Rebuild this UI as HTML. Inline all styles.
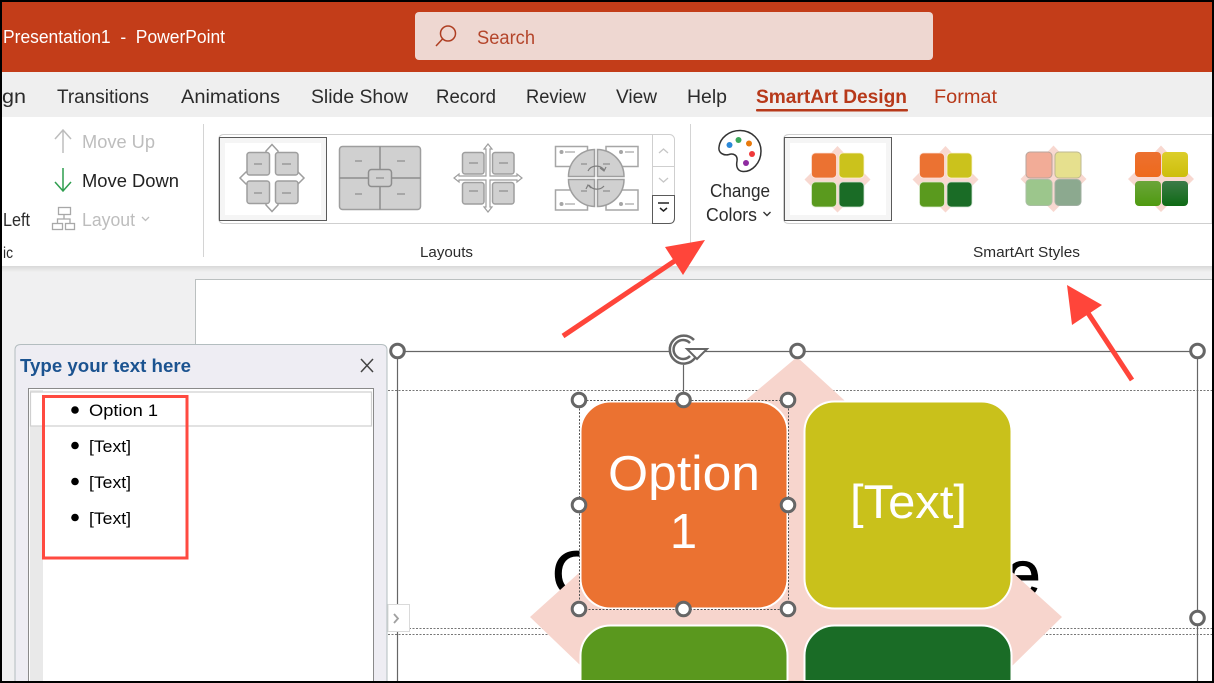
<!DOCTYPE html>
<html><head><meta charset="utf-8"><title>PowerPoint</title>
<style>
html,body{margin:0;padding:0;background:#000;width:1214px;height:683px;overflow:hidden}
svg{display:block;position:absolute;left:0;top:0;overflow:hidden}
text{font-family:"Liberation Sans",sans-serif;fill:#2b2b2b}
</style></head><body>
<svg width="1214" height="683" viewBox="0 0 1214 683" xmlns="http://www.w3.org/2000/svg">
<defs>
<linearGradient id="sh" x1="0" y1="0" x2="0" y2="1"><stop offset="0" stop-color="#d8d8d8"/><stop offset="1" stop-color="#f0f0f0"/></linearGradient>
<linearGradient id="g1" x1="0" y1="0" x2="0" y2="1"><stop offset="0" stop-color="#EC7030"/><stop offset="1" stop-color="#EE6A1C"/></linearGradient>
<linearGradient id="g2" x1="0" y1="0" x2="0" y2="1"><stop offset="0" stop-color="#DCCE2A"/><stop offset="1" stop-color="#CDBE0C"/></linearGradient>
<linearGradient id="g3" x1="0" y1="0" x2="0" y2="1"><stop offset="0" stop-color="#6BA53A"/><stop offset="1" stop-color="#4F9A10"/></linearGradient>
<linearGradient id="g4" x1="0" y1="0" x2="0" y2="1"><stop offset="0" stop-color="#3D7B48"/><stop offset="1" stop-color="#0E6A14"/></linearGradient>
<g id="pk"><path fill="#F8D8D0" d="M0 -33.500 L7 -26 L7 -7 L26 -7 L33 0 L26 7 L7 7 L7 26 L0 33 L-7 26 L-7 7 L-26 7 L-33 0 L-26 -7 L-7 -7 L-7 -26Z"/></g>
<g id="st"><use href="#pk"/>
<rect x="-26" y="-26.500" width="25" height="25" rx="4" fill="#EB7232" stroke="#fbe3da" stroke-width=".8"/>
<rect x="1.500" y="-26.500" width="25" height="25" rx="4" fill="#CBC21C" stroke="#fbf3d0" stroke-width=".8"/>
<rect x="-26" y="2.500" width="25" height="25" rx="4" fill="#5A9A1E" stroke="#dcebd0" stroke-width=".8"/>
<rect x="1.500" y="2.500" width="25" height="25" rx="4" fill="#1A6C26" stroke="#cfe3d2" stroke-width=".8"/></g>
</defs>

<!-- window background -->
<rect x="2" y="2" width="1210" height="679" fill="#F0F0F1"/>
<!-- title bar -->
<rect x="2" y="2" width="1210" height="70" fill="#C33D19"/>
<text x="3" y="43" font-size="18" textLength="222" lengthAdjust="spacingAndGlyphs" style="fill:#fff" xml:space="preserve">Presentation1  -  PowerPoint</text>
<rect x="415" y="12" width="518" height="48" rx="4" fill="#EED7D1"/>
<g fill="none" stroke="#AE3E22" stroke-width="1.500"><circle cx="448" cy="33.500" r="7.500"/><path d="M442.500 39 L436 46"/></g>
<text x="477" y="44" font-size="19" textLength="58" lengthAdjust="spacingAndGlyphs" style="fill:#B4452B">Search</text>

<!-- tabs -->
<rect x="2" y="72" width="1210" height="45" fill="#EFEFEF"/>
<g font-size="19">
<text x="2" y="103" textLength="24" lengthAdjust="spacingAndGlyphs">gn</text>
<text x="57" y="103" textLength="92" lengthAdjust="spacingAndGlyphs">Transitions</text>
<text x="181" y="103" textLength="99" lengthAdjust="spacingAndGlyphs">Animations</text>
<text x="311" y="103" textLength="97" lengthAdjust="spacingAndGlyphs">Slide Show</text>
<text x="436" y="103" textLength="60" lengthAdjust="spacingAndGlyphs">Record</text>
<text x="526" y="103" textLength="60" lengthAdjust="spacingAndGlyphs">Review</text>
<text x="616" y="103" textLength="41" lengthAdjust="spacingAndGlyphs">View</text>
<text x="687" y="103" textLength="40" lengthAdjust="spacingAndGlyphs">Help</text>
<text x="756" y="103" textLength="151" lengthAdjust="spacingAndGlyphs" font-weight="bold" style="fill:#B7391A">SmartArt Design</text>
<text x="934" y="103" textLength="63" lengthAdjust="spacingAndGlyphs" style="fill:#B7391A">Format</text>
</g>
<rect x="756" y="109" width="152" height="2.500" rx="1" fill="#B7391A"/>

<!-- ribbon -->
<rect x="2" y="117" width="1210" height="149" fill="#fff"/>
<rect x="2" y="266" width="1210" height="6" fill="url(#sh)"/>
<rect x="203" y="124" width="1" height="133" fill="#D4D4D4"/>
<rect x="690" y="124" width="1" height="133" fill="#D4D4D4"/>

<!-- left group -->
<g fill="none" stroke="#BDBDBD" stroke-width="1.500"><path d="M63 153 V130 M55 139 L63 130 L71 139"/></g>
<g fill="none" stroke="#2F9E4F" stroke-width="1.500"><path d="M63 168 V191 M55 182 L63 191 L71 182"/></g>
<g fill="none" stroke="#A8A8A8" stroke-width="1.300"><rect x="58.500" y="207.500" width="12" height="7"/><rect x="52.500" y="223.500" width="10" height="6"/><rect x="65.500" y="223.500" width="9" height="6"/><path d="M64 214.500 V219 M57.500 223.500 V219 H70 V223.500"/></g>
<text x="82" y="148" font-size="18" textLength="73" lengthAdjust="spacingAndGlyphs" style="fill:#BDBDBD">Move Up</text>
<text x="82" y="187" font-size="18" textLength="97" lengthAdjust="spacingAndGlyphs" style="fill:#222">Move Down</text>
<text x="82" y="226" font-size="18" textLength="53" lengthAdjust="spacingAndGlyphs" style="fill:#BDBDBD">Layout</text>
<path d="M142 217 L145.500 220.500 L149 217" fill="none" stroke="#BDBDBD" stroke-width="1.300"/>
<text x="3" y="226" font-size="18" textLength="27" lengthAdjust="spacingAndGlyphs">Left</text>
<text x="3" y="258" font-size="16" textLength="10" lengthAdjust="spacingAndGlyphs">ic</text>

<!-- layouts gallery -->
<rect x="218.500" y="134.500" width="456" height="89" rx="5" fill="#fff" stroke="#CFCFCF"/>
<rect x="219.500" y="137.500" width="107" height="83" fill="#F5F5F5" stroke="#5A5A5A"/>
<rect x="225" y="143" width="96" height="72" fill="#fff"/>
<!-- icon 1 -->
<path fill="#fff" stroke="#9E9E9E" stroke-width="1.500" d="M272 144.500 L278 151 V172 H298 L304 178 L298 184 H278 V205 L272 211.500 L266 205 V184 H246 L240 178 L246 172 H266 V151Z"/>
<g fill="#D0D0D0" stroke="#9E9E9E" stroke-width="1.500">
<rect x="247" y="152.500" width="22.500" height="22.500" rx="2.500"/><rect x="275.500" y="152.500" width="22.500" height="22.500" rx="2.500"/>
<rect x="247" y="181" width="22.500" height="22.500" rx="2.500"/><rect x="275.500" y="181" width="22.500" height="22.500" rx="2.500"/>
</g>
<g stroke="#8E8E8E" stroke-width="1.200"><path d="M254 164 H262 M282 164 H291 M254 193 H262 M282 193 H291"/></g>
<!-- icon 2 -->
<rect x="339.500" y="146.500" width="81" height="63" rx="3" fill="#D0D0D0" stroke="#9E9E9E" stroke-width="1.500"/>
<path d="M380 146.500 V209.500 M339.500 178 H420.500" stroke="#8E8E8E" stroke-width="1.500"/>
<rect x="368.500" y="169.500" width="23" height="17" rx="3" fill="#D0D0D0" stroke="#8E8E8E" stroke-width="1.500"/>
<path d="M355 161 H362 M397 161 H405 M355 194 H362 M397 194 H405 M376 178 H384" stroke="#8E8E8E" stroke-width="1.200"/>
<!-- icon 3 -->
<path fill="#fff" stroke="#9E9E9E" stroke-width="1.200" d="M488 144 L492 149 H490 V176 H517 V174 L522 178 L517 182 V180 H490 V207 H492 L488 212 L484 207 H486 V180 H459 V182 L454 178 L459 174 V176 H486 V149 H484Z"/>
<g fill="#D0D0D0" stroke="#9E9E9E" stroke-width="1.500">
<rect x="462.500" y="152.500" width="21.500" height="21.500" rx="2.500"/><rect x="492.500" y="152.500" width="21.500" height="21.500" rx="2.500"/>
<rect x="462.500" y="182.500" width="21.500" height="21.500" rx="2.500"/><rect x="492.500" y="182.500" width="21.500" height="21.500" rx="2.500"/>
</g>
<path d="M469 163 H478 M499 163 H508 M469 191 H478 M499 191 H508" stroke="#8E8E8E" stroke-width="1.200"/>
<!-- icon 4 -->
<g fill="#fff" stroke="#A6A6A6" stroke-width="1.500">
<rect x="555.500" y="146.500" width="32" height="20"/><rect x="606" y="146.500" width="32" height="20"/>
<rect x="555.500" y="190" width="32" height="20"/><rect x="606" y="190" width="32" height="20"/>
</g>
<g fill="#A6A6A6"><circle cx="561.500" cy="152" r="2"/><circle cx="621" cy="152" r="2"/><circle cx="561.500" cy="204" r="2"/><circle cx="621" cy="204" r="2"/></g>
<path d="M565 152 H575 M625 152 H634 M565 204 H575 M625 204 H634" stroke="#A6A6A6" stroke-width="1.200"/>
<g fill="#D0D0D0" stroke="#9E9E9E" stroke-width="1.500">
<path d="M594.500 149.500 V176.500 H568.500 A27 27 0 0 1 594.500 149.500Z"/><path d="M597.500 149.500 V176.500 H624 A27 27 0 0 0 597.500 149.500Z"/>
<path d="M594.500 206.500 V179.500 H568.500 A27 27 0 0 0 594.500 206.500Z"/><path d="M597.500 206.500 V179.500 H624 A27 27 0 0 1 597.500 206.500Z"/>
</g>
<g fill="none" stroke="#7E7E7E" stroke-width="1.200"><path d="M588 171 A9 8 0 0 1 604 170 M604 186 A9 8 0 0 1 589 185 M600 168 L604 171 L606 167 M591 188 L588 185 L586 189"/></g>
<path d="M581 164 H587 M603 164 H610 M581 191 H587 M603 191 H610" stroke="#8E8E8E" stroke-width="1.200"/>
<!-- scroll -->
<path d="M652.500 134.500 V195 M652.500 166.500 H674.500" stroke="#CFCFCF" fill="none"/>
<path d="M659 153 L663.500 149 L668 153" fill="none" stroke="#C6C6C6" stroke-width="1.300"/>
<path d="M659 178 L663.500 182 L668 178" fill="none" stroke="#C6C6C6" stroke-width="1.300"/>
<path d="M652.500 195.500 H674.500 V218 Q674.500 223.500 669 223.500 H652.500Z" fill="#fff" stroke="#5A5A5A"/>
<path d="M658 203 H669" stroke="#222" stroke-width="1.500"/>
<path d="M660 208 L663.500 211 L667 208" fill="none" stroke="#222" stroke-width="1.500"/>
<text x="420" y="257" font-size="15" textLength="53" lengthAdjust="spacingAndGlyphs">Layouts</text>

<!-- palette -->
<path fill="#fff" stroke="#333" stroke-width="1.500" d="M740 130.500 C752 130.500 761 140 761 151 C761 163 752 172 743 171.500 C737 171 736 166 737 161 C738 155 733 153 729 154.500 C724 156 718 153 719 147 C720 138 729 130.500 740 130.500Z"/>
<circle cx="729.500" cy="145" r="3" fill="#2B88D8"/><circle cx="738.500" cy="140" r="3" fill="#3CA85A"/><circle cx="749" cy="143.500" r="3" fill="#E8790C"/><circle cx="752" cy="154" r="3" fill="#F0383A"/><circle cx="746" cy="163" r="3" fill="#8E2BA0"/>
<text x="710" y="197" font-size="18" textLength="60" lengthAdjust="spacingAndGlyphs">Change</text>
<text x="706" y="221" font-size="18" textLength="51" lengthAdjust="spacingAndGlyphs">Colors</text>
<path d="M763.500 212 L767 215.500 L770.500 212" fill="none" stroke="#333" stroke-width="1.400"/>

<!-- styles gallery -->
<path d="M1212 134.500 H789 Q783.500 134.500 783.500 140 V218 Q783.500 223.500 789 223.500 H1212Z" fill="#fff" stroke="#CFCFCF"/>
<rect x="784.500" y="137.500" width="107" height="83" fill="#F5F5F5" stroke="#5A5A5A"/>
<rect x="790" y="143" width="96" height="72" fill="#fff"/>
<use href="#st" x="837.500" y="179.500"/>
<use href="#st" x="945.500" y="179.500"/>
<!-- style 3 -->
<use href="#pk" x="1053.500" y="179"/>
<rect x="1026" y="152" width="26" height="26" rx="4" fill="#F2AC97" stroke="#B8A59C"/>
<rect x="1055" y="152" width="26" height="26" rx="4" fill="#E6E08E" stroke="#BDB892"/>
<rect x="1026" y="179.500" width="26" height="26" rx="4" fill="#9CC68C" stroke="#A9BFA2"/>
<rect x="1055" y="179.500" width="26" height="26" rx="4" fill="#8CA98F" stroke="#A0B0A2"/>
<!-- style 4 -->
<use href="#pk" x="1161" y="179"/>
<rect x="1135" y="152" width="26" height="25" rx="4" fill="url(#g1)"/>
<rect x="1162" y="152" width="26" height="25" rx="4" fill="url(#g2)"/>
<rect x="1135" y="181" width="26" height="25" rx="4" fill="url(#g3)"/>
<rect x="1162" y="181" width="26" height="25" rx="4" fill="url(#g4)"/>
<text x="973" y="257" font-size="15" textLength="107" lengthAdjust="spacingAndGlyphs">SmartArt Styles</text>

<!-- slide -->
<path d="M195.500 681 V279.500 H1212 V681Z" fill="#fff"/>
<path d="M195.500 681 V279.500 H1212" fill="none" stroke="#BBC0C0"/>
<path d="M374 390.500 H1212 M374 628.500 H1212 M374 634.500 H1212" stroke="#777" stroke-width="1" stroke-dasharray="2 1.500" fill="none"/>
<path d="M397.500 351.500 H1197.500 M397.500 351.500 V681 M1197.500 351.500 V681" stroke="#666" stroke-width="1.200" fill="none"/>
<text x="552" y="596" font-size="64" stroke="#000" stroke-width="1" style="fill:#000">C</text>
<text x="1005" y="596" font-size="64" stroke="#000" stroke-width="1" style="fill:#000">e</text>

<!-- smartart -->
<path fill="#F7D5CD" d="M797 357 L844 400 H746Z M746 400 H844 L1011 571 L1062 617 L1011 667 V681 H580 V665 L530 617 L580 572Z"/>
<g stroke="#fff" stroke-width="2">
<rect x="580.500" y="401.500" width="207" height="207" rx="30" fill="#EB7231"/>
<rect x="804.500" y="401.500" width="207" height="207" rx="30" fill="#C9C11B"/>
<path d="M580.500 681 V655.500 A30 30 0 0 1 610.500 625.500 H757.500 A30 30 0 0 1 787.500 655.500 V681Z" fill="#5A981E"/>
<path d="M804.500 681 V655.500 A30 30 0 0 1 834.500 625.500 H981.500 A30 30 0 0 1 1011.500 655.500 V681Z" fill="#1A6C26"/>
</g>
<text x="608" y="490" font-size="49" textLength="152" lengthAdjust="spacingAndGlyphs" style="fill:#fff">Option</text>
<text x="683.500" y="548" font-size="49" text-anchor="middle" style="fill:#fff">1</text>
<text x="850" y="518" font-size="47" textLength="117" lengthAdjust="spacingAndGlyphs" style="fill:#fff">[Text]</text>

<!-- selection -->
<rect x="579.500" y="400.500" width="209" height="209" fill="none" stroke="#555" stroke-width="1" stroke-dasharray="2 1.500"/>
<path d="M683.500 365 V393" stroke="#666" stroke-width="1.200"/>
<g fill="#fff" stroke="#666" stroke-width="3">
<circle cx="579" cy="400" r="6.800"/><circle cx="683.500" cy="400" r="6.800"/><circle cx="788" cy="400" r="6.800"/>
<circle cx="579" cy="505" r="6.800"/><circle cx="788" cy="505" r="6.800"/>
<circle cx="579" cy="609" r="6.800"/><circle cx="683.500" cy="609" r="6.800"/><circle cx="788" cy="609" r="6.800"/>
<circle cx="397.500" cy="351" r="6.800"/><circle cx="797.500" cy="351" r="6.800"/><circle cx="1197.500" cy="351" r="6.800"/><circle cx="1197.500" cy="618" r="6.800"/>
</g>
<!-- rotate handle -->
<g fill="none" stroke="#666">
<path d="M694 340 A14 14 0 1 0 695 358" stroke-width="2.500" fill="#fff"/>
<path d="M690 343 A9.500 9.500 0 1 0 690 356" stroke-width="2.500"/>
</g>
<path d="M687 349 H707 L697 359Z" fill="#fff" stroke="#666" stroke-width="2"/>

<!-- text pane -->
<path d="M15 681 V350 Q15 344.500 21 344.500 H381 Q387 344.500 387 350 V681Z" fill="#EEEDF3"/>
<path d="M15 681 V350 Q15 344.500 21 344.500 H381 Q387 344.500 387 350 V681" fill="none" stroke="#B3BDBF"/>
<text x="20" y="372" font-size="18" font-weight="bold" textLength="171" lengthAdjust="spacingAndGlyphs" style="fill:#1B5390">Type your text here</text>
<path d="M361 359 L373 372 M373 359 L361 372" stroke="#444" stroke-width="1.500" fill="none"/>
<path d="M28.500 681 V388.500 H373.500 V681Z" fill="#fff"/>
<path d="M28.500 681 V388.500 H373.500 V681" fill="none" stroke="#8A8A8A"/>
<rect x="30" y="390" width="13" height="291" fill="#E9E9E9"/>
<rect x="30.500" y="392" width="341" height="34" fill="#fff" stroke="#CFCFCF" stroke-width="1.200"/>
<g fill="#000"><circle cx="75" cy="410" r="3.800"/><circle cx="75" cy="445.500" r="3.800"/><circle cx="75" cy="481.500" r="3.800"/><circle cx="75" cy="517.500" r="3.800"/></g>
<g font-size="17">
<text x="89" y="416" textLength="69" lengthAdjust="spacingAndGlyphs" style="fill:#000">Option 1</text>
<text x="89" y="452" textLength="42" lengthAdjust="spacingAndGlyphs" style="fill:#000">[Text]</text>
<text x="89" y="488" textLength="42" lengthAdjust="spacingAndGlyphs" style="fill:#000">[Text]</text>
<text x="89" y="524" textLength="42" lengthAdjust="spacingAndGlyphs" style="fill:#000">[Text]</text>
</g>
<rect x="388" y="604.500" width="21.500" height="27" fill="#fff" stroke="#DADADA"/>
<path d="M394 614 L398 618.500 L394 623" fill="none" stroke="#A0A0A0" stroke-width="1.800"/>

<!-- annotations -->
<rect x="43.500" y="396.500" width="143.500" height="161.500" fill="none" stroke="#FF4A40" stroke-width="3"/>
<path d="M563 336 L682 256" stroke="#FF453A" stroke-width="5" fill="none"/>
<path d="M705 240 L665 247 L683 275Z" fill="#FF453A"/>
<path d="M1132 380 L1086 310" stroke="#FF453A" stroke-width="5" fill="none"/>
<path d="M1067 285 L1072 325 L1102 305Z" fill="#FF453A"/>

<!-- outer border -->
<path d="M1 0 V683 M1213 0 V683 M0 1 H1214 M0 682 H1214" stroke="#000" stroke-width="2" fill="none"/>
</svg>
</body></html>
